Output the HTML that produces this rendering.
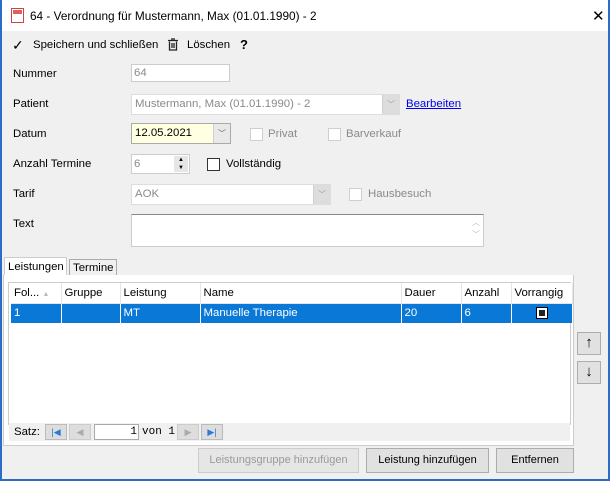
<!DOCTYPE html>
<html><head><meta charset="utf-8"><style>
*{box-sizing:border-box;margin:0;padding:0}
body{width:610px;height:481px;background:#2b6cc4;font-family:"Liberation Sans",sans-serif;font-size:11.4px;color:#000;position:relative;overflow:hidden}
.win{position:absolute;left:2px;top:0;width:606px;height:479px;background:#f0f0f0}
.a{position:absolute}
.title{left:0;top:0;width:606px;height:31px;background:#fff}
.lbl{position:absolute;font-size:11.4px;white-space:nowrap}
.box{position:absolute;background:#fff;border:1px solid #d9d9d9}
.dis{color:#8a8a8a}
.cb{position:absolute;width:13px;height:13px;background:#fff;border:1px solid #333}
.cbd{border-color:#cfcfcf}
.dd{position:absolute;top:0;right:0;width:17px;height:100%;background:#e6e6e6;border-left:1px solid #d0d0d0;font-size:8px;color:#999;text-align:center;line-height:19px}
.btn{position:absolute;background:#e1e1e1;border:1px solid #adadad;text-align:center;line-height:23px;white-space:nowrap}
table{border-collapse:collapse;position:absolute;left:9px;top:283px;table-layout:fixed;width:561px}
td{height:20px;padding:0 3px;border-right:1px solid #e5e5e5;white-space:nowrap;overflow:hidden}
th{font-weight:normal;text-align:left;height:20px;padding:0 3px;background:#fff;border-right:1px solid #e5e5e5;border-bottom:1px solid #e5e5e5;white-space:nowrap;overflow:hidden}
tr.sel td{background:#0a78d7;color:#fff;border-right:1px solid #fff}
</style></head><body>
<div class="win">
<div class="a title"></div>
<div class="a" style="left:9px;top:8px;width:13px;height:15px;border:1px solid #c44;background:#fff"><div style="margin:1px;height:4px;background:#e06060"></div></div>
<div class="lbl" style="left:28px;top:9px;font-size:11.8px">64 - Verordnung für Mustermann, Max (01.01.1990) - 2</div>
<div class="lbl" style="left:590px;top:7px;font-size:15px">✕</div>

<div class="lbl" style="left:10px;top:37px;font-size:14px">✓</div>
<div class="lbl" style="left:31px;top:39px">Speichern und schließen</div>
<svg class="a" style="left:165px;top:38px" width="12" height="13"><path d="M1 2.5h10M4 1h4M2.5 3.5v8.5h7V3.5M5 5v5M7 5v5" stroke="#222" fill="none" stroke-width="1.3"/></svg>
<div class="lbl" style="left:185px;top:39px">Löschen</div>
<div class="lbl" style="left:238px;top:37px;font-weight:bold;font-size:13px">?</div>

<div class="lbl" style="left:11px;top:68px">Nummer</div>
<div class="box" style="left:129px;top:64px;width:99px;height:18px;border-color:#ccc"><span class="dis" style="position:absolute;left:2px;top:2px">64</span></div>

<div class="lbl" style="left:11px;top:98px">Patient</div>
<div class="box" style="left:129px;top:94px;width:269px;height:21px;border-color:#ddd"><span class="dis" style="position:absolute;left:3px;top:3px">Mustermann, Max (01.01.1990) - 2</span><div class="dd" style="background:#ddd">﹀</div></div>
<div class="lbl" style="left:404px;top:98px;color:#0000ee;text-decoration:underline">Bearbeiten</div>

<div class="lbl" style="left:11px;top:128px">Datum</div>
<div class="box" style="left:129px;top:123px;width:100px;height:21px;background:#ffffe1;border-color:#aaa"><span style="position:absolute;left:3px;top:3px">12.05.2021</span><div class="dd" style="background:#e9e9e9;color:#555">﹀</div></div>
<div class="cb cbd" style="left:248px;top:128px"></div><div class="lbl dis" style="left:266px;top:128px">Privat</div>
<div class="cb cbd" style="left:326px;top:128px"></div><div class="lbl dis" style="left:344px;top:128px">Barverkauf</div>

<div class="lbl" style="left:11px;top:158px">Anzahl Termine</div>
<div class="box" style="left:129px;top:154px;width:59px;height:20px;border-color:#ccc"><span class="dis" style="position:absolute;left:2px;top:3px">6</span><div class="a" style="right:1px;top:1px;width:14px;height:16px;background:#e6e6e6;font-size:6px;line-height:8px;text-align:center">▲<br>▼</div></div>
<div class="cb" style="left:205px;top:158px"></div><div class="lbl" style="left:224px;top:158px">Vollständig</div>

<div class="lbl" style="left:11px;top:188px">Tarif</div>
<div class="box" style="left:129px;top:184px;width:200px;height:21px;border-color:#ddd"><span class="dis" style="position:absolute;left:3px;top:3px">AOK</span><div class="dd" style="background:#ddd">﹀</div></div>
<div class="cb cbd" style="left:347px;top:188px"></div><div class="lbl dis" style="left:366px;top:188px">Hausbesuch</div>

<div class="lbl" style="left:11px;top:218px">Text</div>
<div class="box" style="left:129px;top:214px;width:353px;height:33px;border-color:#ccc;border-top-color:#888"><div class="a" style="right:3px;top:2px;font-size:8px;color:#bbb;line-height:12px">︿<br>﹀</div></div>

<div class="a" style="left:2px;top:257px;width:63px;height:19px;background:#fff;border:1px solid #ccc;border-bottom:none"></div>
<div class="lbl" style="left:6px;top:261px">Leistungen</div>
<div class="a" style="left:67px;top:259px;width:48px;height:17px;border:1px solid #aaa;border-bottom:none"></div>
<div class="lbl" style="left:71px;top:262px">Termine</div>
<div class="a" style="left:1px;top:275px;width:571px;height:171px;background:#fff;border:1px solid #ccc;border-top:none"></div>
<div class="a" style="left:6px;top:282px;width:563px;height:143px;background:#fff;border:1px solid #ccc"></div>
<table>
<colgroup><col style="width:50px"><col style="width:59px"><col style="width:80px"><col style="width:201px"><col style="width:60px"><col style="width:50px"><col style="width:61px"></colgroup>
<tr><th>Fol... <span style="color:#bbb;font-size:7px">▲</span></th><th>Gruppe</th><th>Leistung</th><th>Name</th><th>Dauer</th><th>Anzahl</th><th>Vorrangig</th></tr>
<tr class="sel"><td>1</td><td></td><td>MT</td><td>Manuelle Therapie</td><td>20</td><td>6</td><td style="text-align:center"><span style="display:inline-block;width:12px;height:12px;background:#fff;border:1px solid #000;padding:2px;vertical-align:middle"><span style="display:block;width:6px;height:6px;background:#222"></span></span></td></tr>
</table>
<div class="a" style="left:7px;top:423px;width:561px;height:18px;background:#f0f0f0"></div>
<div class="lbl" style="left:12px;top:426px">Satz:</div>
<div class="a" style="left:43px;top:424px;width:22px;height:16px;background:#ddd;border:1px solid #bbb;color:#2a7ad8;font-size:9px;text-align:center;line-height:14px">|◀</div>
<div class="a" style="left:67px;top:424px;width:22px;height:16px;background:#ddd;border:1px solid #ccc;color:#aaa;font-size:9px;text-align:center;line-height:14px">◀</div>
<div class="a" style="left:92px;top:424px;width:45px;height:16px;background:#fff;border:1px solid #aaa;text-align:right;font-family:'Liberation Mono',monospace;font-size:11px;line-height:14px;padding-right:1px">1</div>
<div class="lbl" style="left:140px;top:426px;font-family:'Liberation Mono',monospace;font-size:11px">von 1</div>
<div class="a" style="left:175px;top:424px;width:22px;height:16px;background:#ddd;border:1px solid #ccc;color:#aaa;font-size:9px;text-align:center;line-height:14px">▶</div>
<div class="a" style="left:199px;top:424px;width:22px;height:16px;background:#ddd;border:1px solid #bbb;color:#2a7ad8;font-size:9px;text-align:center;line-height:14px">▶|</div>

<div class="btn" style="left:575px;top:332px;width:24px;height:23px;font-size:15px;line-height:20px">↑</div>
<div class="btn" style="left:575px;top:361px;width:24px;height:23px;font-size:15px;line-height:20px">↓</div>

<div class="btn" style="left:196px;top:448px;width:161px;height:25px;color:#999;border-color:#ccc;background:#e6e6e6;font-size:11px">Leistungsgruppe hinzufügen</div>
<div class="btn" style="left:364px;top:448px;width:123px;height:25px;font-size:11px">Leistung hinzufügen</div>
<div class="btn" style="left:494px;top:448px;width:78px;height:25px;font-size:11px">Entfernen</div>
</div>
</body></html>
